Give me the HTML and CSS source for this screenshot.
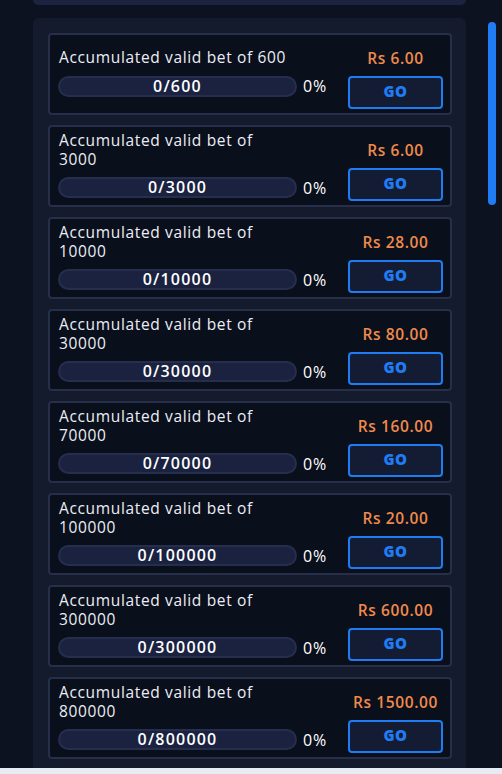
FILE: index.html
```html
<!DOCTYPE html>
<html>
<head>
<meta charset="utf-8">
<link rel="stylesheet" href="styles.css">
</head>
<body>
<div class="screen">
  <div class="main">
    <div class="top-panel"></div>
    <div class="panel">
      <div class="card">
        <div class="info">
          <div class="title">Accumulated valid bet of 600</div>
          <div class="progress-row"><div class="bar">0/600</div><span class="pct">0%</span></div>
        </div>
        <div class="reward"><div class="amount">Rs 6.00</div><button class="go">GO</button></div>
      </div>
      <div class="card">
        <div class="info">
          <div class="title">Accumulated valid bet of 3000</div>
          <div class="progress-row"><div class="bar">0/3000</div><span class="pct">0%</span></div>
        </div>
        <div class="reward"><div class="amount">Rs 6.00</div><button class="go">GO</button></div>
      </div>
      <div class="card">
        <div class="info">
          <div class="title">Accumulated valid bet of 10000</div>
          <div class="progress-row"><div class="bar">0/10000</div><span class="pct">0%</span></div>
        </div>
        <div class="reward"><div class="amount">Rs 28.00</div><button class="go">GO</button></div>
      </div>
      <div class="card">
        <div class="info">
          <div class="title">Accumulated valid bet of 30000</div>
          <div class="progress-row"><div class="bar">0/30000</div><span class="pct">0%</span></div>
        </div>
        <div class="reward"><div class="amount">Rs 80.00</div><button class="go">GO</button></div>
      </div>
      <div class="card">
        <div class="info">
          <div class="title">Accumulated valid bet of 70000</div>
          <div class="progress-row"><div class="bar">0/70000</div><span class="pct">0%</span></div>
        </div>
        <div class="reward"><div class="amount">Rs 160.00</div><button class="go">GO</button></div>
      </div>
      <div class="card">
        <div class="info">
          <div class="title">Accumulated valid bet of 100000</div>
          <div class="progress-row"><div class="bar">0/100000</div><span class="pct">0%</span></div>
        </div>
        <div class="reward"><div class="amount">Rs 20.00</div><button class="go">GO</button></div>
      </div>
      <div class="card">
        <div class="info">
          <div class="title">Accumulated valid bet of 300000</div>
          <div class="progress-row"><div class="bar">0/300000</div><span class="pct">0%</span></div>
        </div>
        <div class="reward"><div class="amount">Rs 600.00</div><button class="go">GO</button></div>
      </div>
      <div class="card">
        <div class="info">
          <div class="title">Accumulated valid bet of 800000</div>
          <div class="progress-row"><div class="bar">0/800000</div><span class="pct">0%</span></div>
        </div>
        <div class="reward"><div class="amount">Rs 1500.00</div><button class="go">GO</button></div>
      </div>
    </div>
  </div>
  <div class="scroll-track"><div class="thumb"></div></div>
</div>
<div class="page-strip"></div>
</body>
</html>
```

FILE: styles.css
```css
* { box-sizing: border-box; }
html, body {
  margin: 0;
  padding: 0;
  background: #0d1220;
  font-family: "Open Sans", "Liberation Sans", sans-serif;
  overflow: hidden;
}
.screen {
  display: flex;
  height: 768px;
  overflow: hidden;
}
.main {
  margin-left: 33px;
  width: 433px;
  display: flex;
  flex-direction: column;
}
.top-panel {
  height: 5px;
  margin-bottom: 13px;
  background: #1b2341;
  border-radius: 0 0 5px 5px;
}
.panel {
  flex: 1;
  background: #141b2d;
  border-radius: 6px 6px 0 0;
  padding: 15px 14px 10px 15px;
  display: flex;
  flex-direction: column;
  gap: 10px;
  overflow: hidden;
}
.card {
  flex: none;
  height: 82px;
  border: 2px solid #262e4a;
  border-radius: 4px;
  background: #0a0f1c;
  display: flex;
  align-items: center;
  padding: 0 7px 0 8px;
}
.info {
  flex: 1;
  display: flex;
  flex-direction: column;
  gap: 8px;
  margin-bottom: 3px;
}
.title {
  color: #eceef5;
  font-size: 15.5px;
  font-weight: 500;
  letter-spacing: 0.65px;
  line-height: 19px;
  max-width: 233px;
  padding-left: 1px;
}
.progress-row {
  display: flex;
  align-items: center;
  gap: 6px;
}
.bar {
  width: 239px;
  height: 21px;
  border: 2px solid #252e4c;
  background: #1a2240;
  border-radius: 11px;
  color: #ffffff;
  font-weight: 600;
  font-size: 16px;
  letter-spacing: 1.2px;
  line-height: 17px;
  text-align: center;
}
.pct {
  color: #ffffff;
  font-size: 16px;
  letter-spacing: 0.8px;
  font-weight: 500;
}
.reward {
  width: 95px;
  display: flex;
  flex-direction: column;
  align-items: center;
  gap: 8px;
  margin-top: 8px;
}
.amount {
  color: #f08a4b;
  font-size: 15.5px;
  letter-spacing: 0.6px;
  line-height: 20px;
  font-weight: 600;
}
.go {
  width: 95px;
  height: 33px;
  border: 2px solid #1f7cf4;
  border-radius: 4px;
  background: #141c33;
  color: #1f7cf4;
  font-family: inherit;
  font-weight: 800;
  font-size: 15px;
  letter-spacing: 0.5px;
  padding: 0 0 3px 0;
}
.scroll-track {
  margin-left: 22px;
  width: 8px;
  padding-top: 22px;
}
.thumb {
  height: 183px;
  background: #1f7cf4;
  border-radius: 4px;
}
.page-strip {
  height: 6px;
  background: #e6ebf4;
}
```
